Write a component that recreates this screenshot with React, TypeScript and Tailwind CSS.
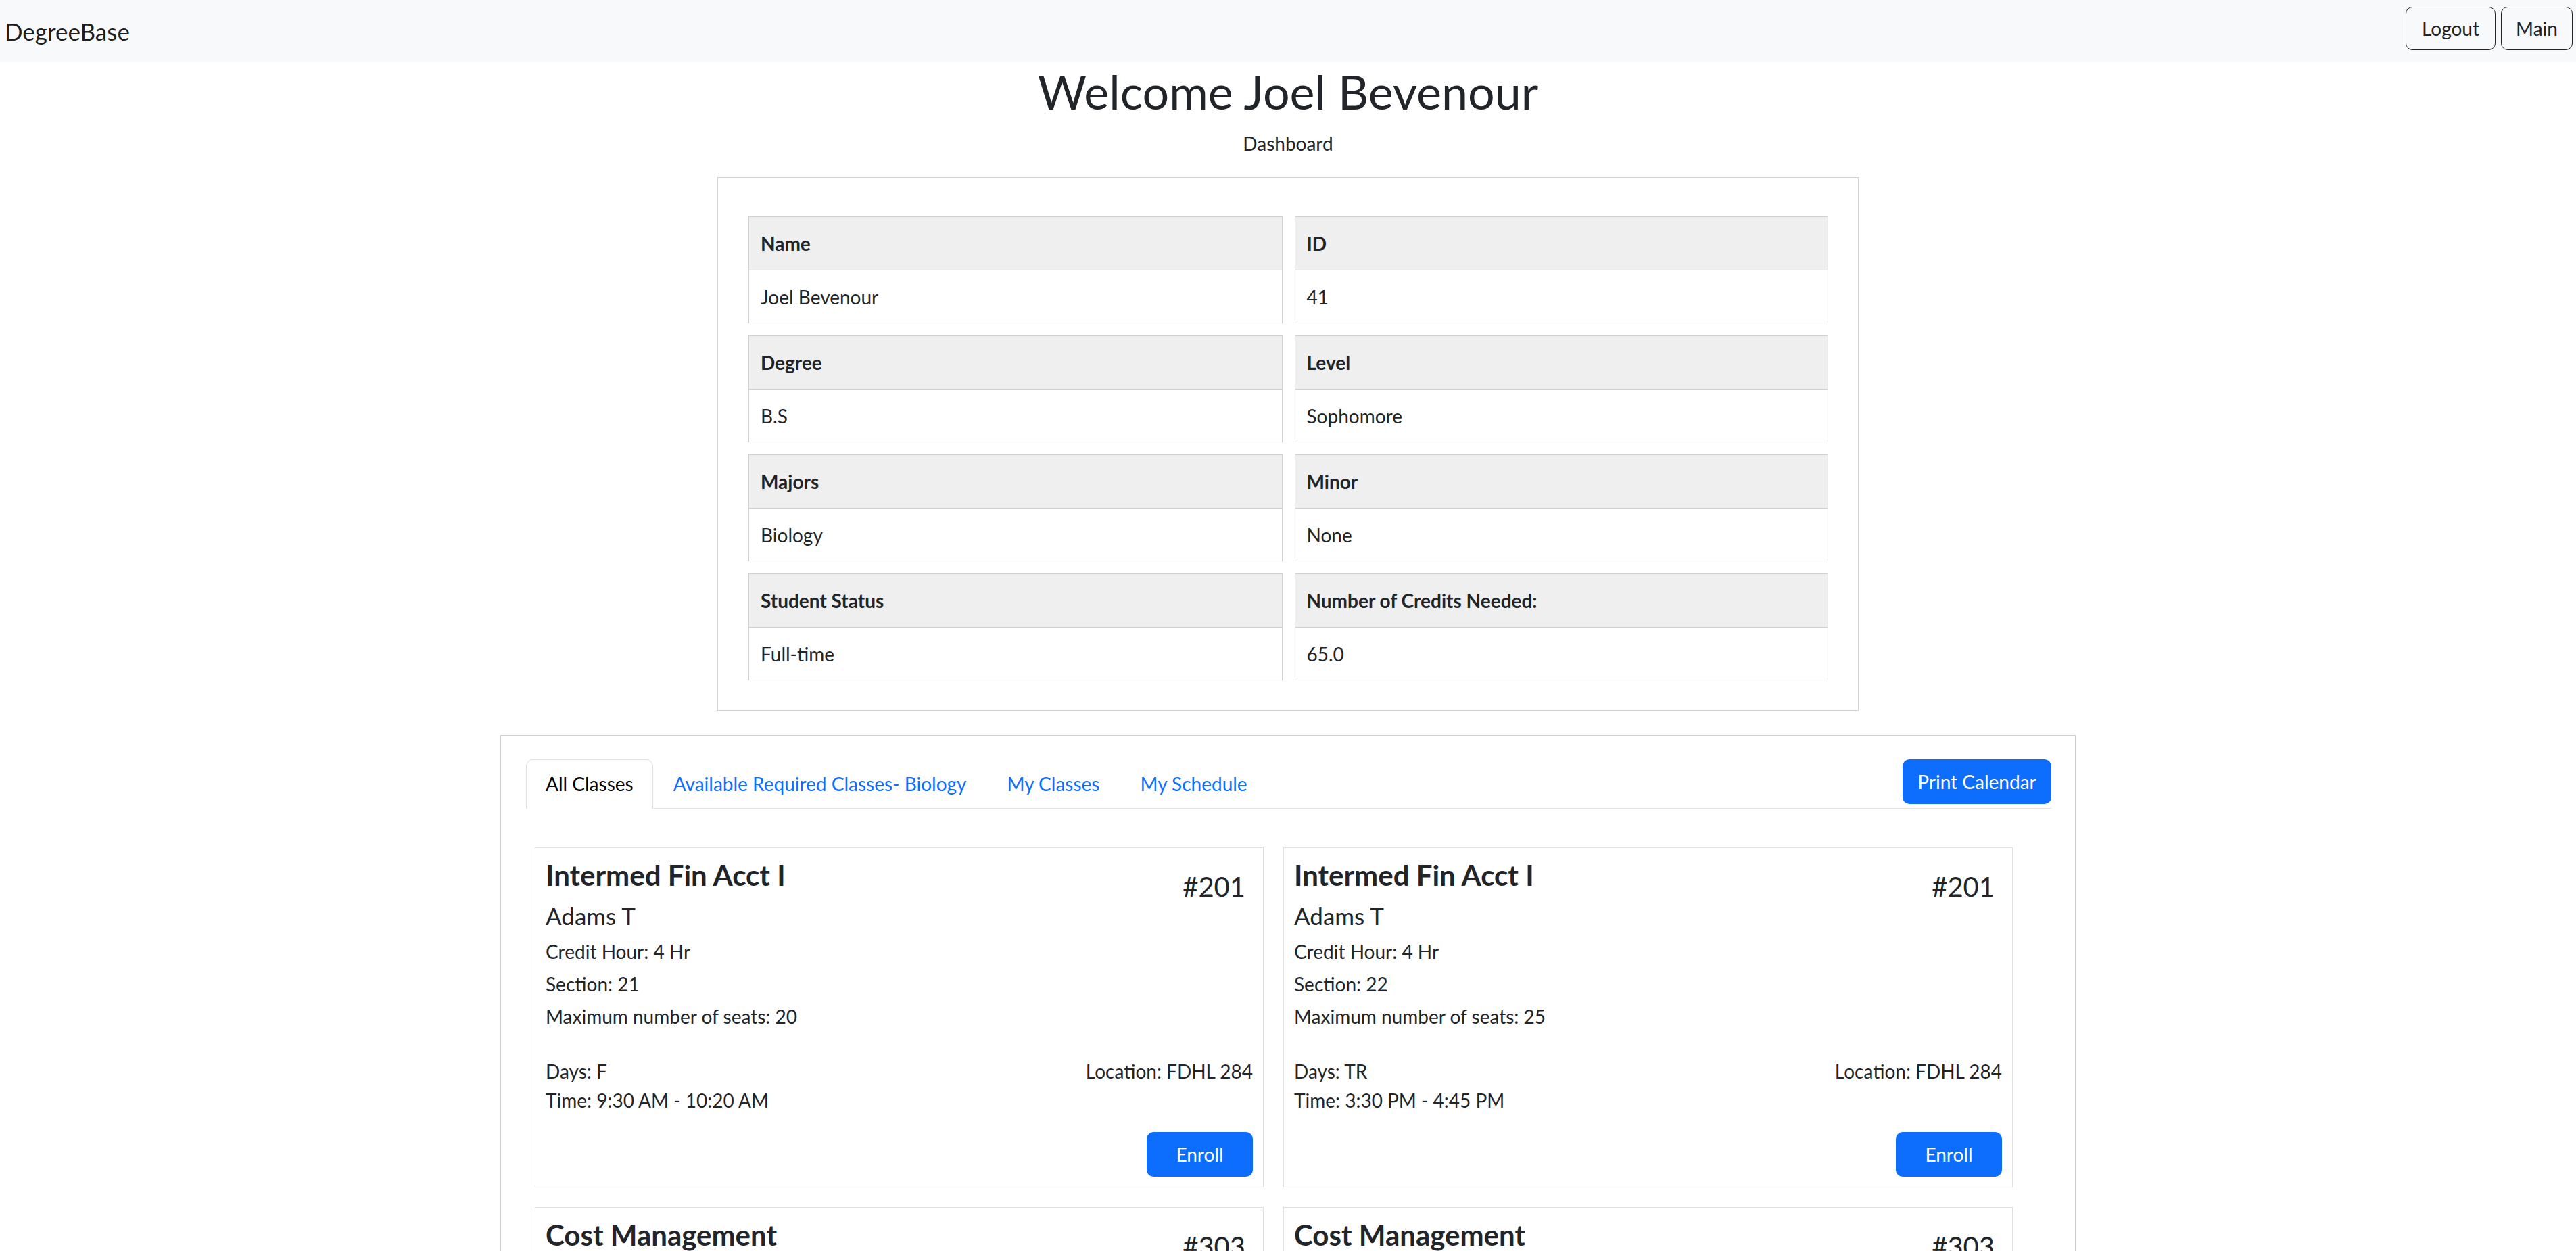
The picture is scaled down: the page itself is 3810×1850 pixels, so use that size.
const info = [
  ["Name", "Joel Bevenour", "ID", "41"],
  ["Degree", "B.S", "Level", "Sophomore"],
  ["Majors", "Biology", "Minor", "None"],
  ["Student Status", "Full-time", "Number of Credits Needed:", "65.0"],
];

const classes = [
  { title: "Intermed Fin Acct I", num: "#201", prof: "Adams T", hours: 4, section: 21, seats: 20, days: "F", time: "9:30 AM - 10:20 AM", loc: "FDHL 284" },
  { title: "Intermed Fin Acct I", num: "#201", prof: "Adams T", hours: 4, section: 22, seats: 25, days: "TR", time: "3:30 PM - 4:45 PM", loc: "FDHL 284" },
  { title: "Cost Management", num: "#303", prof: "Baker M", hours: 3, section: 11, seats: 30, days: "MW", time: "11:00 AM - 12:15 PM", loc: "FDHL 120" },
  { title: "Cost Management", num: "#303", prof: "Baker M", hours: 3, section: 12, seats: 30, days: "TR", time: "1:00 PM - 2:15 PM", loc: "FDHL 120" },
];

function InfoCell({ label, value }: { label: string; value: string }) {
  return (
    <div className="border border-[#d0d0d0]">
      <div className="h-[79px] flex items-center px-[17px] bg-[#efefef] border-b border-[#d0d0d0] font-bold">
        {label}
      </div>
      <div className="h-[77px] flex items-center px-[17px]">{value}</div>
    </div>
  );
}

function ClassCard({ c }: { c: (typeof classes)[number] }) {
  return (
    <div className="border border-[#dfdfdf] p-[15px] flex flex-col">
      <div className="h-[50px] flex justify-between items-start">
        <div className="text-[42px] leading-[50px] font-bold">{c.title}</div>
        <div className="text-[40px] leading-[40px] mt-[22px] mr-[11px]">{c.num}</div>
      </div>
      <div className="text-[35px] leading-[42px] mt-[14px]">{c.prof}</div>
      <div className="mt-[8px] leading-[48px]">
        <div>Credit Hour: {c.hours} Hr</div>
        <div>Section: {c.section}</div>
        <div>Maximum number of seats: {c.seats}</div>
      </div>
      <div className="mt-[36px] leading-[43px] flex justify-between">
        <div>
          <div>Days: {c.days}</div>
          <div>Time: {c.time}</div>
        </div>
        <div>Location: {c.loc}</div>
      </div>
      <div className="mt-[25px] flex justify-end">
        <button className="w-[157px] h-[66px] rounded-[10px] bg-[#0d6efd] text-white">Enroll</button>
      </div>
    </div>
  );
}

export default function App() {
  return (
    <div className="h-[1850px] overflow-hidden bg-white text-[#212529] text-[28px] font-['Lato','Liberation_Sans',sans-serif]">
      <nav className="h-[92px] bg-[#f8f9fa] flex items-center justify-between pl-[7px] pr-[5px]">
        <div className="text-[35px] text-black/90">DegreeBase</div>
        <div className="flex gap-[8px] mb-[8px]">
          <button className="w-[133px] h-[64px] rounded-[10px] border border-[#212529]">Logout</button>
          <button className="w-[106px] h-[64px] rounded-[10px] border border-[#212529]">Main</button>
        </div>
      </nav>

      <h1 className="mt-[1px] text-center text-[70px] leading-[84px] font-normal">Welcome Joel Bevenour</h1>
      <div className="mt-[14px] text-center leading-[42px]">Dashboard</div>

      <div className="mt-[29px] mx-auto w-[1688px] border border-[#d3d3d3] pt-[57px] pl-[45px] pr-[44px] pb-[44px]">
        <div className="grid grid-cols-2 gap-y-[18px] gap-x-[18px]">
          {info.map((r) => [
            <InfoCell key={r[0]} label={r[0]} value={r[1]} />,
            <InfoCell key={r[2]} label={r[2]} value={r[3]} />,
          ])}
        </div>
      </div>

      <div className="mt-[36px] mx-auto w-[2330px] border border-[#cfcfcf] pt-[35px] pl-[37px] pr-[35px]">
        <div className="flex justify-between items-start border-b border-[#dee2e6] leading-[42px]">
          <div className="flex">
            <div className="-mb-px px-[28px] py-[14px] bg-white border border-[#dee2e6] border-b-white rounded-t-[10px] text-black">
              All Classes
            </div>
            <div className="px-[30px] py-[15px] text-[#0d6efd]">Available Required Classes- Biology</div>
            <div className="px-[30px] py-[15px] text-[#0d6efd]">My Classes</div>
            <div className="px-[30px] py-[15px] text-[#0d6efd]">My Schedule</div>
          </div>
          <button className="w-[220px] h-[66px] rounded-[10px] bg-[#0d6efd] text-white">Print Calendar</button>
        </div>
        <div className="mt-[57px] pl-[13px] grid grid-cols-[1078px_1079px] gap-[29px]">
          {classes.map((c, i) => (
            <ClassCard key={i} c={c} />
          ))}
        </div>
      </div>
    </div>
  );
}
